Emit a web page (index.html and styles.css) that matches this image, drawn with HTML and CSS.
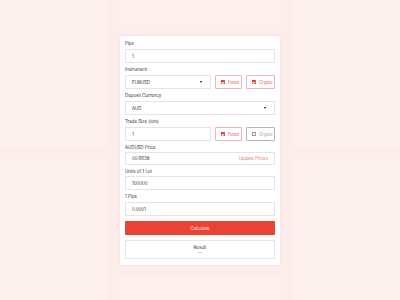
FILE: index.html
```html
<!DOCTYPE html>
<html>
<head>
<meta charset="utf-8">
<link rel="stylesheet" href="styles.css">
</head>
<body>
<div class="page">
  <div class="card">
    <div class="group">
      <div class="label">Pips</div>
      <div class="input">1</div>
    </div>
    <div class="group">
      <div class="label">Instrument</div>
      <div class="row">
        <div class="input select grow">EURUSD<span class="arrow"></span></div>
        <div class="toggle on forex"><span class="box"></span>Forex</div>
        <div class="toggle on crypto"><span class="box"></span>Crypto</div>
      </div>
    </div>
    <div class="group">
      <div class="label">Deposit Currency</div>
      <div class="input select">AUD<span class="arrow"></span></div>
    </div>
    <div class="group">
      <div class="label">Trade Size (lots)</div>
      <div class="row">
        <div class="input grow">1</div>
        <div class="toggle on forex"><span class="box"></span>Forex</div>
        <div class="toggle off crypto"><span class="box"></span>Crypto</div>
      </div>
    </div>
    <div class="group tight">
      <div class="label">AUDUSD Price</div>
      <div class="input short price">00.6638<span class="update">Update Prices</span></div>
    </div>
    <div class="group tight">
      <div class="label">Units of 1 Lot</div>
      <div class="input">100000</div>
    </div>
    <div class="group">
      <div class="label">1 Pips</div>
      <div class="input">0.0001</div>
    </div>
    <div class="btn">Calculate</div>
    <div class="result">
      <div class="rlabel">Result</div>
      <div class="rvalue">—</div>
    </div>
  </div>
</div>
</body>
</html>
```
FILE: styles.css
```css
html, body {
  margin: 0;
  padding: 0;
}
body {
  width: 400px;
  height: 300px;
  overflow: hidden;
  font-family: Inter, "Liberation Sans", sans-serif;
  background-color: #fcecea;
  background-image:
    linear-gradient(#fdf1f0, #fdf1f0),
    linear-gradient(#fdf1f0, #fdf1f0),
    linear-gradient(#fdf1f0, #fdf1f0),
    linear-gradient(#fdf1f0, #fdf1f0),
    linear-gradient(#fdefee, #fdefee),
    linear-gradient(#fdefee, #fdefee);
  background-repeat: no-repeat;
  background-size:
    107px 147px,
    107px 147px,
    107px 140px,
    107px 140px,
    160px 24px,
    160px 25px;
  background-position:
    0 0,
    293px 0,
    0 160px,
    293px 160px,
    120px 0,
    120px 275px;
}
.page {
  padding-top: 36px;
}
.card {
  width: 150px;
  margin: 0 auto;
  background: #ffffff;
  padding: 5px 5px 6px;
  box-shadow: 0 0 2px rgba(200, 150, 150, 0.15);
}
.group {
  margin-bottom: 4px;
}
.label {
  font-size: 4.4px;
  line-height: 6px;
  height: 6px;
  color: #333;
  margin-bottom: 2px;
}
.group.tight .label {
  margin-bottom: 1px;
}
.input {
  box-sizing: border-box;
  height: 14px;
  border: 1px solid #e4e4e4;
  font-size: 4.4px;
  color: #333;
  padding: 0 6px;
  display: flex;
  align-items: center;
  background: #fff;
}
.input.short {
  height: 13px;
}
.select {
  justify-content: space-between;
}
.arrow {
  width: 0;
  height: 0;
  border-left: 1.2px solid transparent;
  border-right: 1.2px solid transparent;
  border-top: 2px solid #111;
  margin-right: 2px;
}
.row {
  display: flex;
  gap: 4px;
}
.grow {
  flex: 1;
}
.toggle {
  box-sizing: border-box;
  height: 14px;
  border: 1px solid #f2b3b1;
  border-radius: 1px;
  display: flex;
  align-items: center;
  gap: 3px;
  padding-left: 5px;
  font-size: 4.2px;
  color: #e5534b;
}
.forex {
  width: 27px;
}
.crypto {
  width: 29px;
}
.box {
  width: 4px;
  height: 4px;
  box-sizing: border-box;
  background: #e03b30;
  border-radius: 0.5px;
  position: relative;
}
.toggle.on .box::after {
  content: "";
  position: absolute;
  left: 1.2px;
  top: 0.6px;
  width: 1px;
  height: 1.8px;
  border-right: 0.5px solid #fff;
  border-bottom: 0.5px solid #fff;
  transform: rotate(45deg);
}
.toggle.off {
  border-color: #b5b5b5;
  color: #999;
}
.toggle.off .box {
  background: #fff;
  border: 0.6px solid #999;
}
.price {
  justify-content: space-between;
}
.update {
  color: #e5756d;
  font-size: 4.4px;
}
.btn {
  margin-top: 5px;
  height: 14px;
  background: #ea4234;
  color: #fde3e0;
  font-size: 4.4px;
  display: flex;
  align-items: center;
  justify-content: center;
  border-radius: 1px;
}
.result {
  margin-top: 5px;
  box-sizing: border-box;
  height: 19px;
  border: 1px solid #e6e6e6;
  display: flex;
  flex-direction: column;
  align-items: center;
  justify-content: center;
}
.rlabel {
  font-size: 4.4px;
  color: #333;
  line-height: 5px;
}
.rvalue {
  font-size: 4.4px;
  color: #777;
  line-height: 5px;
}
```
